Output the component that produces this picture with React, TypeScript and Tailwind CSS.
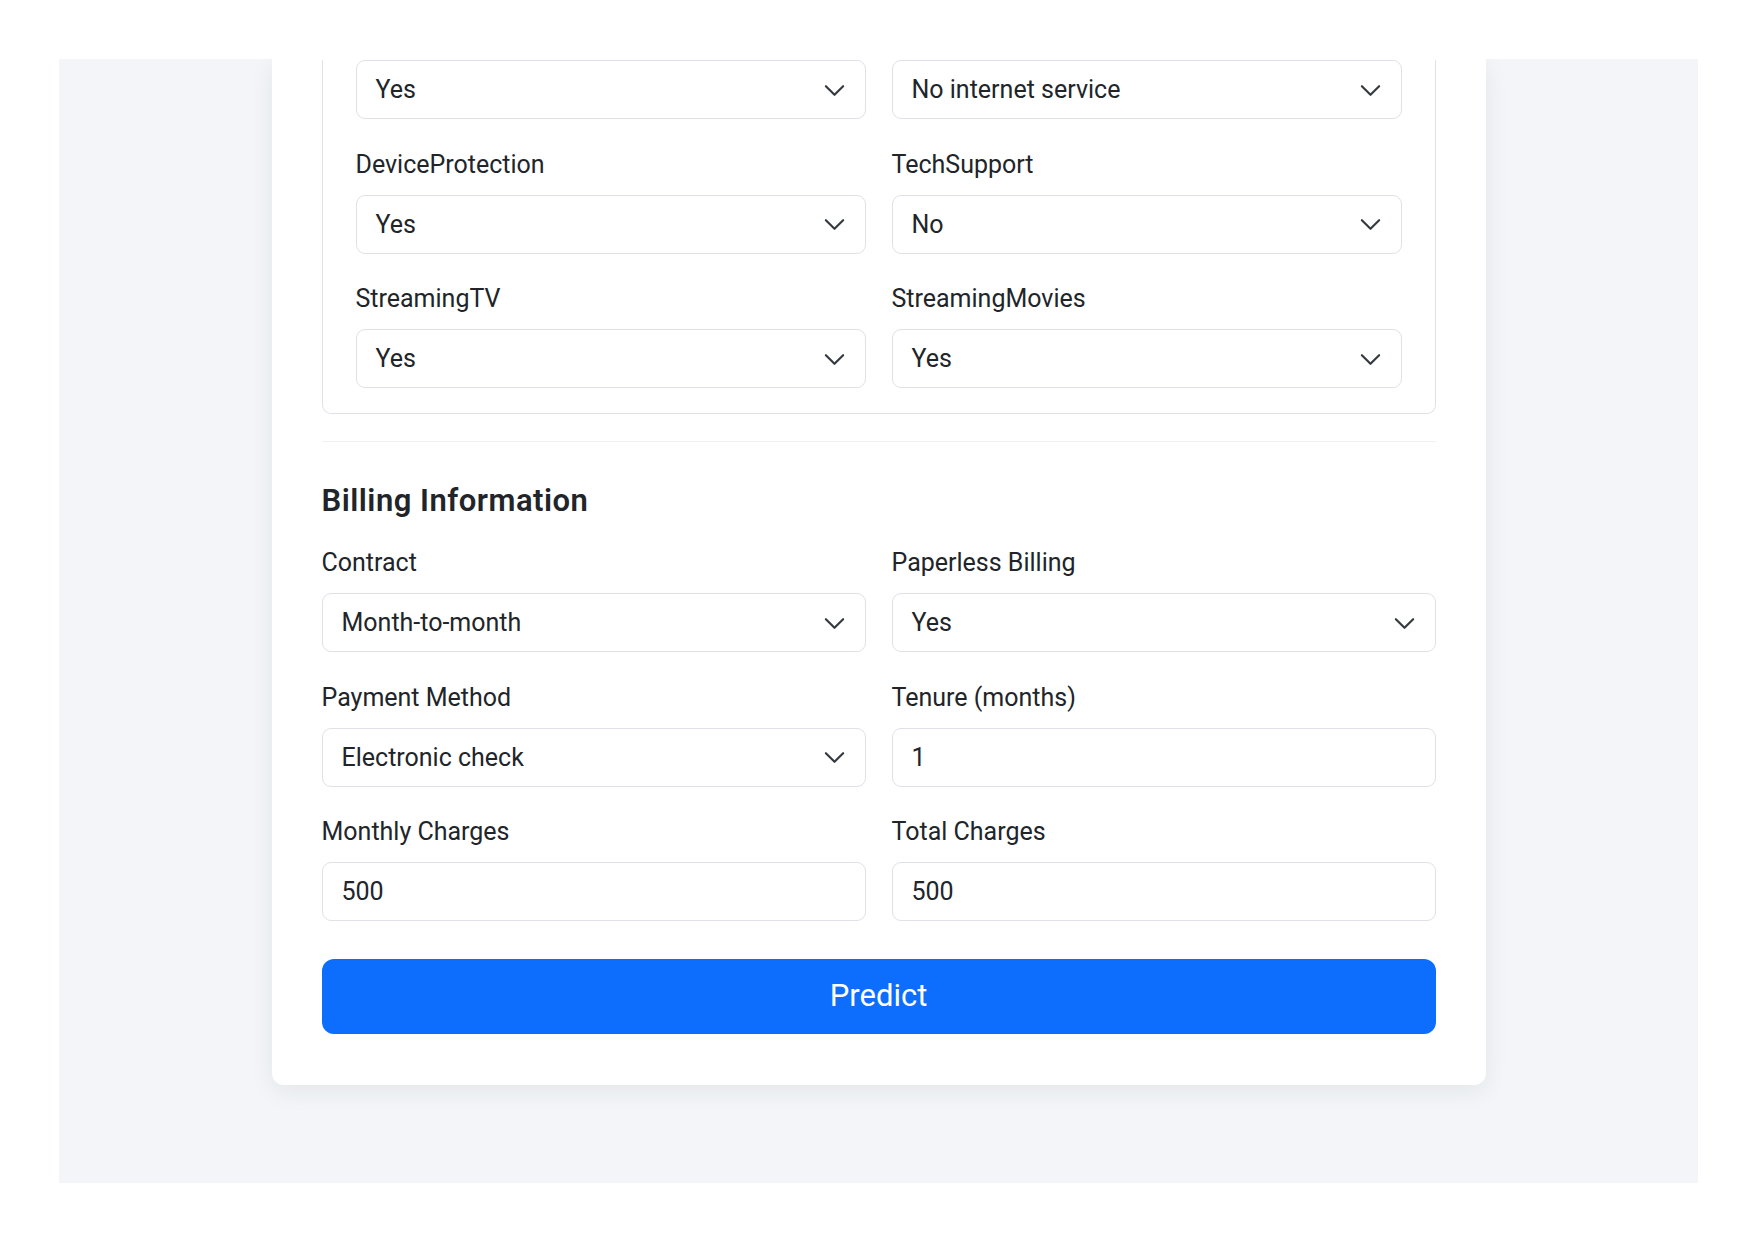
import type { ReactNode } from "react";

const FONT = "font-['Segoe_UI',Roboto,'Liberation_Sans',sans-serif]";

function Chevron() {
  return (
    <svg width="23" height="23" viewBox="0 0 16 16" fill="none" className="shrink-0">
      <path d="m2 5 6 6 6-6" stroke="#343a40" strokeWidth="1.5" strokeLinecap="round" strokeLinejoin="round" />
    </svg>
  );
}

function Field({ label, children }: { label?: string; children: ReactNode }) {
  return (
    <div className="flex flex-col">
      {label ? <label className="mb-[12px] text-[25px] leading-[37px] text-[#212529]">{label}</label> : null}
      {children}
    </div>
  );
}

function Select({ value }: { value: string }) {
  return (
    <div className="flex h-[59px] items-center justify-between rounded-[9px] border border-[#dee2e6] bg-white pl-[19px] pr-[19px] pt-[1px] text-[25px] text-[#212529]">
      <span>{value}</span>
      <Chevron />
    </div>
  );
}

function Input({ value }: { value: string }) {
  return (
    <div className="flex h-[59px] items-center rounded-[9px] border border-[#dee2e6] bg-white px-[19px] pt-[1px] text-[25px] text-[#212529]">
      {value}
    </div>
  );
}

export default function App() {
  return (
    <div className={`min-h-screen bg-white pb-[58px] pl-[59px] pr-[57px] pt-[59px] ${FONT}`}>
      <div className="h-[1124px] overflow-hidden bg-[#f3f5f8]">
        <div className="mx-auto w-[1214px] rounded-b-[12px] bg-white px-[50px] pb-[51px] pt-[1px] shadow-[0_6px_24px_rgba(33,37,41,0.07)]">
          {/* services box, top scrolled out of view */}
          <div className="rounded-b-[9px] border-x border-b border-[#dee2e6] px-[33px] pb-[25px]">
            <div className="grid grid-cols-2 gap-x-[26px] gap-y-[26.5px]">
              <Field>
                <Select value="Yes" />
              </Field>
              <Field>
                <Select value="No internet service" />
              </Field>
              <Field label="DeviceProtection">
                <Select value="Yes" />
              </Field>
              <Field label="TechSupport">
                <Select value="No" />
              </Field>
              <Field label="StreamingTV">
                <Select value="Yes" />
              </Field>
              <Field label="StreamingMovies">
                <Select value="Yes" />
              </Field>
            </div>
          </div>

          <hr className="mt-[27px] border-t border-[#eef0f2]" />

          <h5 className="mb-[25px] mt-[40px] text-[31px] font-semibold leading-[37px] tracking-[0.5px] text-[#212529]">
            Billing Information
          </h5>

          <div className="grid grid-cols-2 gap-x-[26px] gap-y-[26.5px]">
            <Field label="Contract">
              <Select value="Month-to-month" />
            </Field>
            <Field label="Paperless Billing">
              <Select value="Yes" />
            </Field>
            <Field label="Payment Method">
              <Select value="Electronic check" />
            </Field>
            <Field label="Tenure (months)">
              <Input value="1" />
            </Field>
            <Field label="Monthly Charges">
              <Input value="500" />
            </Field>
            <Field label="Total Charges">
              <Input value="500" />
            </Field>
          </div>

          <button className="mt-[38px] flex h-[75px] w-full items-center justify-center rounded-[12px] bg-[#0d6efd] text-[31px] text-white">
            Predict
          </button>
        </div>
      </div>
    </div>
  );
}
